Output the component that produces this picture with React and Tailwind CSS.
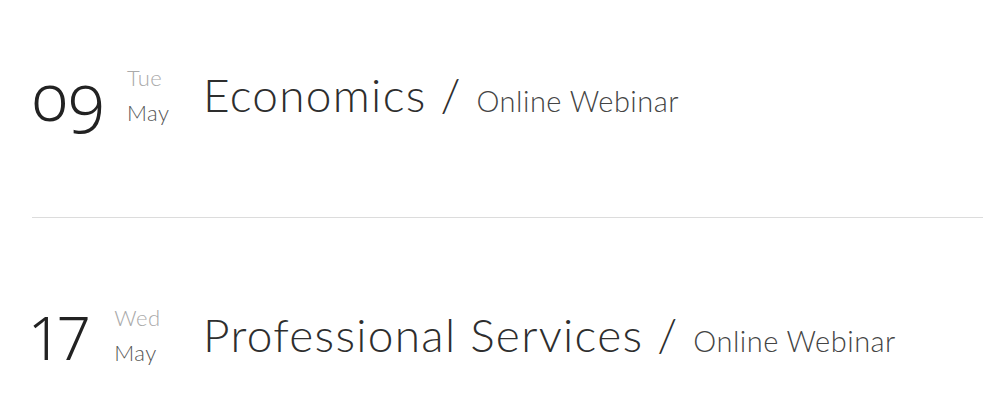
const events = [
  { day: '09', weekday: 'Tue', month: 'May', title: 'Economics', kind: 'Online Webinar', old: true },
  { day: '17', weekday: 'Wed', month: 'May', title: 'Professional Services', kind: 'Online Webinar', old: false },
];

function EventRow({ e }) {
  return (
    <div className="flex items-center h-[190px]">
      {/* date block */}
      <div className="flex items-center gap-[22px] w-[171px] shrink-0">
        <span
          className={
            e.old
              ? 'text-[66px] leading-none font-light text-[#222] oldstyle-nums tracking-[1px]'
              : 'text-[60px] leading-none font-light text-[#222] lining-nums proportional-nums tracking-[3px] mt-[4px]'
          }
          style={{ fontFamily: '"Noto Sans", sans-serif' }}
        >
          {e.day}
        </span>
        <div className="flex flex-col text-[22px] leading-[35px] font-light tracking-[0.5px]">
          <span className="text-[#aaa]">{e.weekday}</span>
          <span className="text-[#555]">{e.month}</span>
        </div>
      </div>
      {/* title */}
      <div className="flex items-baseline text-[#2e2e2e] font-light">
        <span className="text-[46px] leading-none tracking-[1.3px]">{e.title}</span>
        <span className="text-[46px] leading-none ml-[14px] mr-[16px]">/</span>
        <span className="text-[29px] leading-none text-[#444] tracking-[0.5px]">{e.kind}</span>
      </div>
    </div>
  );
}

export default function App() {
  return (
    <div className="bg-white w-[983px] h-[412px] overflow-hidden pl-[32px]" style={{ fontFamily: 'Lato, "Open Sans", sans-serif' }}>
      <EventRow e={events[0]} />
      <div className="mt-[27px] h-[1px] bg-[#dcdcdc]" />
      <div className="mt-[22px]">
        <EventRow e={events[1]} />
      </div>
    </div>
  );
}
